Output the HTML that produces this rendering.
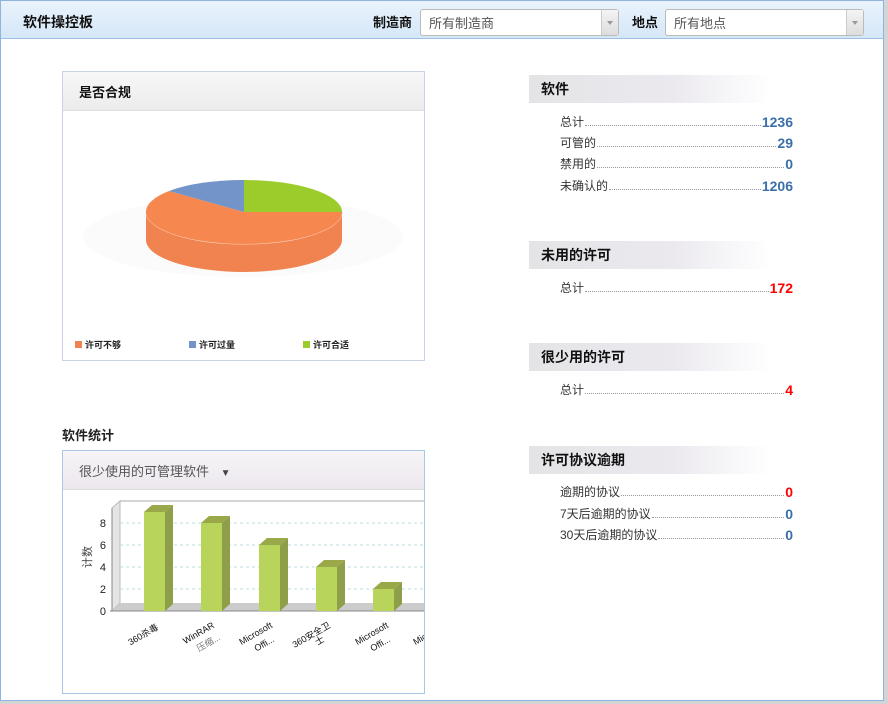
<!DOCTYPE html>
<html><head><meta charset="utf-8"><style>
*{margin:0;padding:0;box-sizing:border-box}
body{width:888px;height:704px;background:#d4d4d4;position:relative;overflow:hidden;font-family:"Liberation Sans","Noto Sans CJK SC",sans-serif;font-size:12px;color:#333}
#frame{position:absolute;left:0;top:0;width:884px;height:701px;background:#fff;border:1px solid #8fb4e0}
#hdr{position:absolute;left:0;top:0;width:882px;height:38px;background:linear-gradient(#eaf3fc,#d5e7f8);border-bottom:1px solid #9cc0e6}
.abs{position:absolute}
.title{left:22px;top:11px;font-size:14px;font-weight:bold;color:#111}
.lbl{font-size:13px;font-weight:bold;color:#111}
.sel{height:27px;border:1px solid #bbb;border-radius:3px;background:#fff;font-size:13px;color:#555;padding:3px 8px}
.sel i{position:absolute;right:0;top:0;width:17px;height:25px;background:linear-gradient(#f4f4f4,#ddd);border-left:1px solid #ccc}
.sel i:after{content:"";position:absolute;left:5px;top:11px;border:3px solid transparent;border-top:4px solid #999}
.panel{border:1px solid #c8d4e4;background:#fff}
.ph{height:39px;border-bottom:1px solid #ddd;background:linear-gradient(#f7f7f7,#ececec);font-size:13px;font-weight:bold;color:#111;padding:10px 16px}
.sh{width:242px;height:28px;background:linear-gradient(90deg,#e4e4e6,#ebe9ef 60%,#fff);font-size:14px;font-weight:bold;color:#111;padding:4px 12px}
.row{position:absolute;left:559px;width:233px;height:18px;font-size:12px;color:#333;display:flex;align-items:flex-end}
.row .d{flex:1;border-bottom:1px dotted #999;margin:0 1px 4px}
.row b{font-size:14px;color:#3a6fa8}
.row b.r{color:#f00}
</style></head><body>
<div id="frame">
<div id="hdr">
<div class="abs title">软件操控板</div>
<div class="abs lbl" style="left:372px;top:11px">制造商</div>
<div class="abs sel" style="left:419px;top:8px;width:199px">所有制造商<i></i></div>
<div class="abs lbl" style="left:631px;top:11px">地点</div>
<div class="abs sel" style="left:664px;top:8px;width:199px">所有地点<i></i></div>
</div>

<div class="abs panel" style="left:61px;top:70px;width:363px;height:290px">
<div class="ph">是否合规</div>
<svg class="abs" style="left:0;top:40px" width="362" height="248">
<ellipse cx="180" cy="125" rx="160" ry="40" fill="#f7f7f7" opacity=".5"/>
<path d="M83 100 L83 128 A98 32 0 0 0 279 128 L279 100 Z" fill="#f08350"/>
<path d="M83 100 A98 32 0 0 0 279 100" fill="none" stroke="#fcd0b8"/>
<path d="M181 100 L181 68 A98 32 0 0 1 279 100 Z" fill="#9ccb2c"/>
<path d="M181 100 L279 100 A98 32 0 0 1 83 100 A98 32 0 0 1 106 79 Z" fill="#f5874f"/>
<path d="M181 100 L106 79 A98 32 0 0 1 181 68 Z" fill="#7394c8"/>
<g font-size="9" font-weight="bold" fill="#222">
<rect x="12" y="229" width="7" height="7" fill="#f08350"/><text x="22" y="236">许可不够</text>
<rect x="126" y="229" width="7" height="7" fill="#7394c8"/><text x="136" y="236">许可过量</text>
<rect x="240" y="229" width="7" height="7" fill="#9ccb2c"/><text x="250" y="236">许可合适</text>
</g></svg>
</div>

<div class="abs" style="left:61px;top:424px;font-size:13px;font-weight:bold;color:#222">软件统计</div>
<div class="abs panel" style="left:61px;top:449px;width:363px;height:244px;border-color:#a8c8e8;overflow:hidden">
<div class="ph" style="font-weight:normal;color:#555;background:linear-gradient(#f7f4f7,#ece8ee)">很少使用的可管理软件 <span style="font-size:10px;margin-left:8px;color:#444">▼</span></div>
<svg class="abs" style="left:0;top:40px" width="362" height="204">
<polygon points="49,17 57,10 362,10 362,112 49,120" fill="#fff"/>
<polygon points="49,17 57,10 57,112 49,120" fill="#e4e4e4" stroke="#bbb"/>
<line x1="57" y1="10" x2="362" y2="10" stroke="#aaa"/>
<g stroke="#bdd" stroke-dasharray="3,3"><line x1="57" y1="32" x2="362" y2="32"/><line x1="57" y1="54" x2="362" y2="54"/><line x1="57" y1="76" x2="362" y2="76"/><line x1="57" y1="98" x2="362" y2="98"/></g>
<polygon points="49,120 57,112 362,112 362,120" fill="#ccc"/>
<line x1="47" y1="120" x2="362" y2="120" stroke="#888"/>
<line x1="49" y1="17" x2="49" y2="120" stroke="#888"/>
<g font-size="11" fill="#222" text-anchor="end"><text x="43" y="124">0</text><text x="43" y="102">2</text><text x="43" y="80">4</text><text x="43" y="58">6</text><text x="43" y="36">8</text></g>
<text transform="translate(28,66) rotate(-90)" font-size="11" fill="#444" text-anchor="middle">计数</text>
<g>
<g transform="translate(81,0)"><polygon points="0,21 8,14 29,14 21,21" fill="#9aa84a"/><polygon points="21,21 29,14 29,113 21,120" fill="#8f9e48"/><rect x="0" y="21" width="21" height="99" fill="#b8d45a"/></g>
<g transform="translate(138,0)"><polygon points="0,32 8,25 29,25 21,32" fill="#9aa84a"/><polygon points="21,32 29,25 29,113 21,120" fill="#8f9e48"/><rect x="0" y="32" width="21" height="88" fill="#b8d45a"/></g>
<g transform="translate(196,0)"><polygon points="0,54 8,47 29,47 21,54" fill="#9aa84a"/><polygon points="21,54 29,47 29,113 21,120" fill="#8f9e48"/><rect x="0" y="54" width="21" height="66" fill="#b8d45a"/></g>
<g transform="translate(253,0)"><polygon points="0,76 8,69 29,69 21,76" fill="#9aa84a"/><polygon points="21,76 29,69 29,113 21,120" fill="#8f9e48"/><rect x="0" y="76" width="21" height="44" fill="#b8d45a"/></g>
<g transform="translate(310,0)"><polygon points="0,98 8,91 29,91 21,98" fill="#9aa84a"/><polygon points="21,98 29,91 29,113 21,120" fill="#8f9e48"/><rect x="0" y="98" width="21" height="22" fill="#b8d45a"/></g>
</g>
<g font-size="9" fill="#111" text-anchor="end">
<text transform="translate(96,138) rotate(-30)">360杀毒</text>
<text transform="translate(152,136) rotate(-30)">WinRAR</text><text transform="translate(158,148) rotate(-30)" fill="#777">压缩...</text>
<text transform="translate(210,136) rotate(-30)">Microsoft</text><text transform="translate(212,150) rotate(-30)">Offi...</text>
<text transform="translate(268,136) rotate(-30)">360安全卫</text><text transform="translate(262,150) rotate(-30)">士</text>
<text transform="translate(326,136) rotate(-30)">Microsoft</text><text transform="translate(328,150) rotate(-30)">Offi...</text>
<text transform="translate(384,136) rotate(-30)">Microsoft</text>
</g></svg>
</div>

<div class="abs sh" style="left:528px;top:74px">软件</div>
<div class="row" style="top:111px">总计<span class="d"></span><b>1236</b></div>
<div class="row" style="top:132px">可管的<span class="d"></span><b>29</b></div>
<div class="row" style="top:153px">禁用的<span class="d"></span><b>0</b></div>
<div class="row" style="top:175px">未确认的<span class="d"></span><b>1206</b></div>

<div class="abs sh" style="left:528px;top:240px">未用的许可</div>
<div class="row" style="top:277px">总计<span class="d"></span><b class="r">172</b></div>

<div class="abs sh" style="left:528px;top:342px">很少用的许可</div>
<div class="row" style="top:379px">总计<span class="d"></span><b class="r">4</b></div>

<div class="abs sh" style="left:528px;top:445px">许可协议逾期</div>
<div class="row" style="top:481px">逾期的协议<span class="d"></span><b class="r">0</b></div>
<div class="row" style="top:503px">7天后逾期的协议<span class="d"></span><b>0</b></div>
<div class="row" style="top:524px">30天后逾期的协议<span class="d"></span><b>0</b></div>
</div>
</body></html>
